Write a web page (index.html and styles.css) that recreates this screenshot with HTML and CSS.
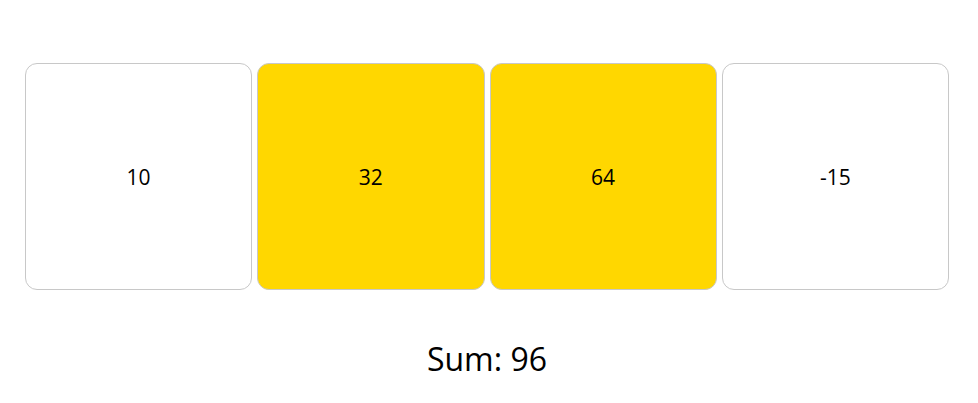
FILE: index.html
```html
<!DOCTYPE html>
<html lang="en">
<head>
<meta charset="utf-8">
<title>Sum</title>
<link rel="stylesheet" href="styles.css">
</head>
<body>
<main class="page">
  <div class="cards">
    <button type="button" class="card" aria-pressed="false">10</button>
    <button type="button" class="card selected" aria-pressed="true">32</button>
    <button type="button" class="card selected" aria-pressed="true">64</button>
    <button type="button" class="card" aria-pressed="false">-15</button>
  </div>
  <p class="sum">Sum: 96</p>
</main>
</body>
</html>
```
FILE: styles.css
```css
* {
  box-sizing: border-box;
}

body {
  margin: 0;
  background: #fff;
  color: #000;
  font-family: "Open Sans", "Noto Sans", sans-serif;
}

.page {
  padding: 63px 29px 0 25px;
}

.cards {
  display: grid;
  grid-template-columns: repeat(4, 1fr);
  gap: 5px;
}

.card {
  aspect-ratio: 1;
  padding: 0;
  border: 1px solid #c8c8c8;
  border-radius: 12px;
  background: #fff;
  color: inherit;
  font: inherit;
  font-size: 21px;
  cursor: pointer;
}

.selected {
  background: gold;
}

.sum {
  margin: 47px 0 0;
  font-size: 32px;
  line-height: 44px;
  text-align: center;
}
```
